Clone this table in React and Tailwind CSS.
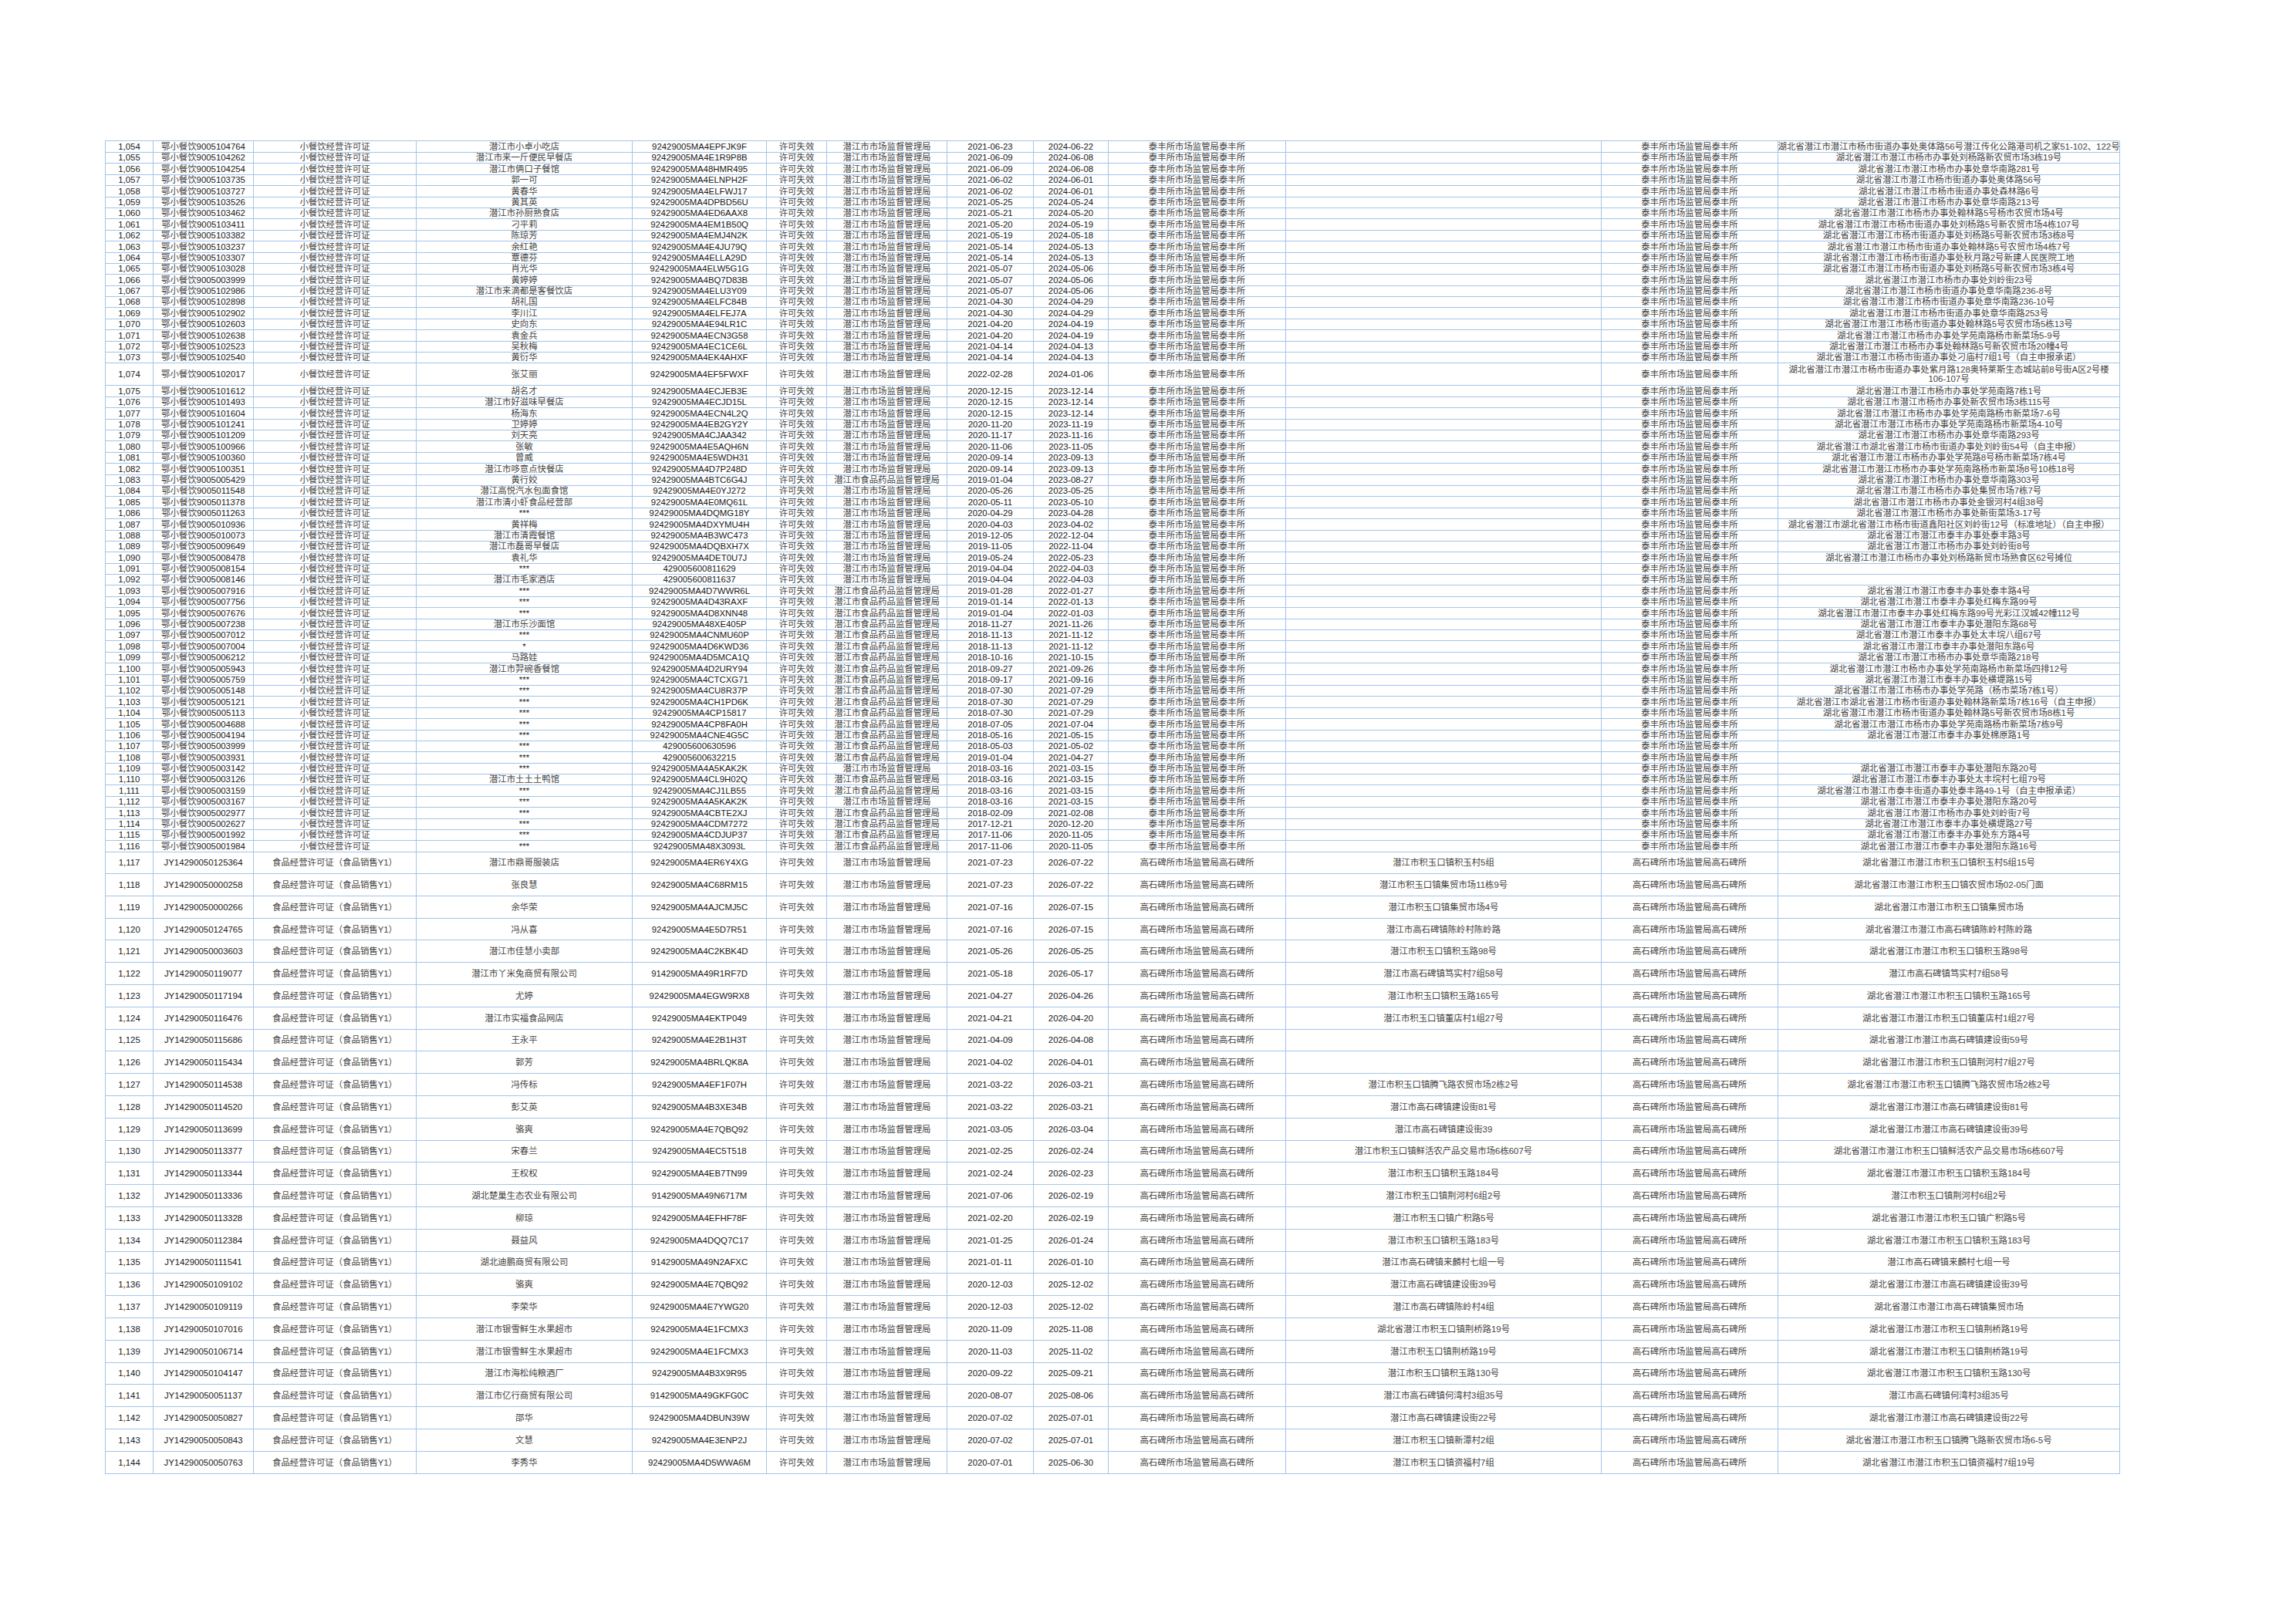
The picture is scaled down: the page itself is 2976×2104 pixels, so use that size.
import React from 'react';

const SHICHANG = '潜江市市场监督管理局';
const SHIYAO = '潜江市食品药品监督管理局';
const TAIFENG = '泰丰所市场监管局泰丰所';
const GAOSHIBEI = '高石碑所市场监管局高石碑所';

// seq, permit no, name, credit code, issuer (m/f), start, end, address
const smallRows = [
  ['1,054', '9005104764', '潜江市小卓小吃店', '92429005MA4EPFJK9F', 'm', '2021-06-23', '2024-06-22', '湖北省潜江市潜江市杨市街道办事处奥体路56号潜江传化公路港司机之家51-102、122号'],
  ['1,055', '9005104262', '潜江市来一斤便民早餐店', '92429005MA4E1R9P8B', 'm', '2021-06-09', '2024-06-08', '湖北省潜江市潜江市杨市办事处刘杨路新农贸市场3栋19号'],
  ['1,056', '9005104254', '潜江市俩口子餐馆', '92429005MA48HMR495', 'm', '2021-06-09', '2024-06-08', '湖北省潜江市潜江市杨市办事处章华南路281号'],
  ['1,057', '9005103735', '郭一可', '92429005MA4ELNPH2F', 'm', '2021-06-02', '2024-06-01', '湖北省潜江市潜江市杨市街道办事处奥体路56号'],
  ['1,058', '9005103727', '黄春华', '92429005MA4ELFWJ17', 'm', '2021-06-02', '2024-06-01', '湖北省潜江市潜江市杨市街道办事处森林路6号'],
  ['1,059', '9005103526', '黄其英', '92429005MA4DPBD56U', 'm', '2021-05-25', '2024-05-24', '湖北省潜江市潜江市杨市办事处章华南路213号'],
  ['1,060', '9005103462', '潜江市孙厨熟食店', '92429005MA4ED6AAX8', 'm', '2021-05-21', '2024-05-20', '湖北省潜江市潜江市杨市办事处翰林路5号杨市农贸市场4号'],
  ['1,061', '9005103411', '刁平莉', '92429005MA4EM1B50Q', 'm', '2021-05-20', '2024-05-19', '湖北省潜江市潜江市杨市街道办事处刘杨路5号新农贸市场4栋107号'],
  ['1,062', '9005103382', '陈琼芳', '92429005MA4EMJ4N2K', 'm', '2021-05-19', '2024-05-18', '湖北省潜江市潜江市杨市街道办事处刘杨路5号新农贸市场3栋8号'],
  ['1,063', '9005103237', '余红艳', '92429005MA4E4JU79Q', 'm', '2021-05-14', '2024-05-13', '湖北省潜江市潜江市杨市街道办事处翰林路5号农贸市场4栋7号'],
  ['1,064', '9005103307', '覃德芬', '92429005MA4ELLA29D', 'm', '2021-05-14', '2024-05-13', '湖北省潜江市潜江市杨市街道办事处秋月路2号新建人民医院工地'],
  ['1,065', '9005103028', '肖光华', '92429005MA4ELW5G1G', 'm', '2021-05-07', '2024-05-06', '湖北省潜江市潜江市杨市街道办事处刘杨路5号新农贸市场3栋4号'],
  ['1,066', '9005003999', '黄婷婷', '92429005MA4BQ7D83B', 'm', '2021-05-07', '2024-05-06', '湖北省潜江市潜江市杨市办事处刘岭街23号'],
  ['1,067', '9005102986', '潜江市来滴都是客餐饮店', '92429005MA4ELU3Y09', 'm', '2021-05-07', '2024-05-06', '湖北省潜江市潜江市杨市街道办事处章华南路236-8号'],
  ['1,068', '9005102898', '胡礼国', '92429005MA4ELFC84B', 'm', '2021-04-30', '2024-04-29', '湖北省潜江市潜江市杨市街道办事处章华南路236-10号'],
  ['1,069', '9005102902', '李川江', '92429005MA4ELFEJ7A', 'm', '2021-04-30', '2024-04-29', '湖北省潜江市潜江市杨市街道办事处章华南路253号'],
  ['1,070', '9005102603', '史向东', '92429005MA4E94LR1C', 'm', '2021-04-20', '2024-04-19', '湖北省潜江市潜江市杨市街道办事处翰林路5号农贸市场5栋13号'],
  ['1,071', '9005102638', '袁金兵', '92429005MA4ECN3G58', 'm', '2021-04-20', '2024-04-19', '湖北省潜江市潜江市杨市办事处学苑南路杨市新菜场5-9号'],
  ['1,072', '9005102523', '吴秋梅', '92429005MA4EC1CE6L', 'm', '2021-04-14', '2024-04-13', '湖北省潜江市潜江市杨市办事处翰林路5号新农贸市场20幢4号'],
  ['1,073', '9005102540', '黄衍华', '92429005MA4EK4AHXF', 'm', '2021-04-14', '2024-04-13', '湖北省潜江市潜江市杨市街道办事处刁庙村7组1号（自主申报承诺）'],
  ['1,074', '9005102017', '张艾丽', '92429005MA4EF5FWXF', 'm', '2022-02-28', '2024-01-06', '湖北省潜江市潜江市杨市街道办事处紫月路128奥特莱斯生态城站前8号街A区2号楼106-107号', true],
  ['1,075', '9005101612', '胡名才', '92429005MA4ECJEB3E', 'm', '2020-12-15', '2023-12-14', '湖北省潜江市潜江市杨市办事处学苑南路7栋1号'],
  ['1,076', '9005101493', '潜江市好滋味早餐店', '92429005MA4ECJD15L', 'm', '2020-12-15', '2023-12-14', '湖北省潜江市潜江市杨市办事处新农贸市场3栋115号'],
  ['1,077', '9005101604', '杨海东', '92429005MA4ECN4L2Q', 'm', '2020-12-15', '2023-12-14', '湖北省潜江市潜江市杨市办事处学苑南路杨市新菜场7-6号'],
  ['1,078', '9005101241', '卫婷婷', '92429005MA4EB2GY2Y', 'm', '2020-11-20', '2023-11-19', '湖北省潜江市潜江市杨市办事处学苑南路杨市新菜场4-10号'],
  ['1,079', '9005101209', '刘天亮', '92429005MA4CJAA342', 'm', '2020-11-17', '2023-11-16', '湖北省潜江市潜江市杨市办事处章华南路293号'],
  ['1,080', '9005100966', '张敏', '92429005MA4E5AQH6N', 'm', '2020-11-06', '2023-11-05', '湖北省潜江市湖北省潜江市杨市街道办事处刘岭街54号（自主申报）'],
  ['1,081', '9005100360', '曾威', '92429005MA4E5WDH31', 'm', '2020-09-14', '2023-09-13', '湖北省潜江市潜江市杨市办事处学苑路8号杨市新菜场7栋4号'],
  ['1,082', '9005100351', '潜江市哆意点快餐店', '92429005MA4D7P248D', 'm', '2020-09-14', '2023-09-13', '湖北省潜江市潜江市杨市办事处学苑南路杨市新菜场8号10栋18号'],
  ['1,083', '9005005429', '黄行姣', '92429005MA4BTC6G4J', 'f', '2019-01-04', '2023-08-27', '湖北省潜江市潜江市杨市办事处章华南路303号'],
  ['1,084', '9005011548', '潜江高悦汽水包面食馆', '92429005MA4E0YJ272', 'm', '2020-05-26', '2023-05-25', '湖北省潜江市潜江市杨市办事处集贸市场7栋7号'],
  ['1,085', '9005011378', '潜江市清小虾食品经营部', '92429005MA4E0MQ61L', 'm', '2020-05-11', '2023-05-10', '湖北省潜江市潜江市杨市办事处金银河村4组38号'],
  ['1,086', '9005011263', '***', '92429005MA4DQMG18Y', 'm', '2020-04-29', '2023-04-28', '湖北省潜江市潜江市杨市办事处新街菜场3-17号'],
  ['1,087', '9005010936', '黄祥梅', '92429005MA4DXYMU4H', 'm', '2020-04-03', '2023-04-02', '湖北省潜江市湖北省潜江市杨市街道鑫阳社区刘岭街12号（标准地址）（自主申报）'],
  ['1,088', '9005010073', '潜江市清霞餐馆', '92429005MA4B3WC473', 'm', '2019-12-05', '2022-12-04', '湖北省潜江市潜江市泰丰办事处泰丰路3号'],
  ['1,089', '9005009649', '潜江市磊哥早餐店', '92429005MA4DQBXH7X', 'm', '2019-11-05', '2022-11-04', '湖北省潜江市潜江市杨市办事处刘岭街8号'],
  ['1,090', '9005008478', '袁礼华', '92429005MA4DET0U7J', 'm', '2019-05-24', '2022-05-23', '湖北省潜江市潜江市杨市办事处刘杨路新贸市场熟食区62号摊位'],
  ['1,091', '9005008154', '***', '429005600811629', 'm', '2019-04-04', '2022-04-03', ''],
  ['1,092', '9005008146', '潜江市毛家酒店', '429005600811637', 'm', '2019-04-04', '2022-04-03', ''],
  ['1,093', '9005007916', '***', '92429005MA4D7WWR6L', 'f', '2019-01-28', '2022-01-27', '湖北省潜江市潜江市泰丰办事处泰丰路4号'],
  ['1,094', '9005007756', '***', '92429005MA4D43RAXF', 'f', '2019-01-14', '2022-01-13', '湖北省潜江市潜江市泰丰办事处红梅东路99号'],
  ['1,095', '9005007676', '***', '92429005MA4D8XNN48', 'f', '2019-01-04', '2022-01-03', '湖北省潜江市潜江市泰丰办事处红梅东路99号光彩江汉城42幢112号'],
  ['1,096', '9005007238', '潜江市乐沙面馆', '92429005MA48XE405P', 'f', '2018-11-27', '2021-11-26', '湖北省潜江市潜江市泰丰办事处潜阳东路68号'],
  ['1,097', '9005007012', '***', '92429005MA4CNMU60P', 'f', '2018-11-13', '2021-11-12', '湖北省潜江市潜江市泰丰办事处太丰垸八组67号'],
  ['1,098', '9005007004', '*', '92429005MA4D6KWD36', 'f', '2018-11-13', '2021-11-12', '湖北省潜江市潜江市泰丰办事处潜阳东路6号'],
  ['1,099', '9005006212', '马路娃', '92429005MA4D5MCA1Q', 'f', '2018-10-16', '2021-10-15', '湖北省潜江市潜江市杨市办事处章华南路218号'],
  ['1,100', '9005005943', '潜江市羿碗香餐馆', '92429005MA4D2URY94', 'f', '2018-09-27', '2021-09-26', '湖北省潜江市潜江市杨市办事处学苑南路杨市新菜场四排12号'],
  ['1,101', '9005005759', '***', '92429005MA4CTCXG71', 'f', '2018-09-17', '2021-09-16', '湖北省潜江市潜江市泰丰办事处横堤路15号'],
  ['1,102', '9005005148', '***', '92429005MA4CU8R37P', 'f', '2018-07-30', '2021-07-29', '湖北省潜江市潜江市杨市办事处学苑路（杨市菜场7栋1号）'],
  ['1,103', '9005005121', '***', '92429005MA4CH1PD6K', 'f', '2018-07-30', '2021-07-29', '湖北省潜江市湖北省潜江市杨市街道办事处翰林路新菜场7栋16号（自主申报）'],
  ['1,104', '9005005113', '***', '92429005MA4CP15817', 'f', '2018-07-30', '2021-07-29', '湖北省潜江市潜江市杨市街道办事处翰林路5号新农贸市场8栋1号'],
  ['1,105', '9005004688', '***', '92429005MA4CP8FA0H', 'f', '2018-07-05', '2021-07-04', '湖北省潜江市潜江市杨市办事处学苑南路杨市新菜场7栋9号'],
  ['1,106', '9005004194', '***', '92429005MA4CNE4G5C', 'f', '2018-05-16', '2021-05-15', '湖北省潜江市潜江市泰丰办事处棉原路1号'],
  ['1,107', '9005003999', '***', '429005600630596', 'f', '2018-05-03', '2021-05-02', ''],
  ['1,108', '9005003931', '***', '429005600632215', 'f', '2019-01-04', '2021-04-27', ''],
  ['1,109', '9005003142', '***', '92429005MA4A5KAK2K', 'm', '2018-03-16', '2021-03-15', '湖北省潜江市潜江市泰丰办事处潜阳东路20号'],
  ['1,110', '9005003126', '潜江市土土土鸭馆', '92429005MA4CL9H02Q', 'f', '2018-03-16', '2021-03-15', '湖北省潜江市潜江市泰丰办事处太丰垸村七组79号'],
  ['1,111', '9005003159', '***', '92429005MA4CJ1LB55', 'f', '2018-03-16', '2021-03-15', '湖北省潜江市潜江市泰丰街道办事处泰丰路49-1号（自主申报承诺）'],
  ['1,112', '9005003167', '***', '92429005MA4A5KAK2K', 'm', '2018-03-16', '2021-03-15', '湖北省潜江市潜江市泰丰办事处潜阳东路20号'],
  ['1,113', '9005002977', '***', '92429005MA4CBTE2XJ', 'f', '2018-02-09', '2021-02-08', '湖北省潜江市潜江市杨市办事处刘岭街7号'],
  ['1,114', '9005002627', '***', '92429005MA4CDM7272', 'f', '2017-12-21', '2020-12-20', '湖北省潜江市潜江市泰丰办事处横堤路27号'],
  ['1,115', '9005001992', '***', '92429005MA4CDJUP37', 'f', '2017-11-06', '2020-11-05', '湖北省潜江市潜江市泰丰办事处东方路4号'],
  ['1,116', '9005001984', '***', '92429005MA48X3093L', 'f', '2017-11-06', '2020-11-05', '湖北省潜江市潜江市泰丰办事处潜阳东路16号'],
];

// seq, permit no, name, credit code, start, end, business address, address
const foodRows = [
  ['1,117', 'JY14290050125364', '潜江市鼎哥服装店', '92429005MA4ER6Y4XG', '2021-07-23', '2026-07-22', '潜江市积玉口镇积玉村5组', '湖北省潜江市潜江市积玉口镇积玉村5组15号'],
  ['1,118', 'JY14290050000258', '张良慧', '92429005MA4C68RM15', '2021-07-23', '2026-07-22', '潜江市积玉口镇集贸市场11栋9号', '湖北省潜江市潜江市积玉口镇农贸市场02-05门面'],
  ['1,119', 'JY14290050000266', '余华荣', '92429005MA4AJCMJ5C', '2021-07-16', '2026-07-15', '潜江市积玉口镇集贸市场4号', '湖北省潜江市潜江市积玉口镇集贸市场'],
  ['1,120', 'JY14290050124765', '冯从喜', '92429005MA4E5D7R51', '2021-07-16', '2026-07-15', '潜江市高石碑镇陈岭村陈岭路', '湖北省潜江市潜江市高石碑镇陈岭村陈岭路'],
  ['1,121', 'JY14290050003603', '潜江市佳慧小卖部', '92429005MA4C2KBK4D', '2021-05-26', '2026-05-25', '潜江市积玉口镇积玉路98号', '湖北省潜江市潜江市积玉口镇积玉路98号'],
  ['1,122', 'JY14290050119077', '潜江市丫米兔商贸有限公司', '91429005MA49R1RF7D', '2021-05-18', '2026-05-17', '潜江市高石碑镇笃实村7组58号', '潜江市高石碑镇笃实村7组58号'],
  ['1,123', 'JY14290050117194', '尤婷', '92429005MA4EGW9RX8', '2021-04-27', '2026-04-26', '潜江市积玉口镇积玉路165号', '湖北省潜江市潜江市积玉口镇积玉路165号'],
  ['1,124', 'JY14290050116476', '潜江市实福食品网店', '92429005MA4EKTP049', '2021-04-21', '2026-04-20', '潜江市积玉口镇董店村1组27号', '湖北省潜江市潜江市积玉口镇董店村1组27号'],
  ['1,125', 'JY14290050115686', '王永平', '92429005MA4E2B1H3T', '2021-04-09', '2026-04-08', '', '湖北省潜江市潜江市高石碑镇建设街59号'],
  ['1,126', 'JY14290050115434', '郭芳', '92429005MA4BRLQK8A', '2021-04-02', '2026-04-01', '', '湖北省潜江市潜江市积玉口镇荆河村7组27号'],
  ['1,127', 'JY14290050114538', '冯传标', '92429005MA4EF1F07H', '2021-03-22', '2026-03-21', '潜江市积玉口镇腾飞路农贸市场2栋2号', '湖北省潜江市潜江市积玉口镇腾飞路农贸市场2栋2号'],
  ['1,128', 'JY14290050114520', '彭艾英', '92429005MA4B3XE34B', '2021-03-22', '2026-03-21', '潜江市高石碑镇建设街81号', '湖北省潜江市潜江市高石碑镇建设街81号'],
  ['1,129', 'JY14290050113699', '骆爽', '92429005MA4E7QBQ92', '2021-03-05', '2026-03-04', '潜江市高石碑镇建设街39', '湖北省潜江市潜江市高石碑镇建设街39号'],
  ['1,130', 'JY14290050113377', '宋春兰', '92429005MA4EC5T518', '2021-02-25', '2026-02-24', '潜江市积玉口镇鲜活农产品交易市场6栋607号', '湖北省潜江市潜江市积玉口镇鲜活农产品交易市场6栋607号'],
  ['1,131', 'JY14290050113344', '王权权', '92429005MA4EB7TN99', '2021-02-24', '2026-02-23', '潜江市积玉口镇积玉路184号', '湖北省潜江市潜江市积玉口镇积玉路184号'],
  ['1,132', 'JY14290050113336', '湖北楚巢生态农业有限公司', '91429005MA49N6717M', '2021-07-06', '2026-02-19', '潜江市积玉口镇荆河村6组2号', '潜江市积玉口镇荆河村6组2号'],
  ['1,133', 'JY14290050113328', '柳琼', '92429005MA4EFHF78F', '2021-02-20', '2026-02-19', '潜江市积玉口镇广积路5号', '湖北省潜江市潜江市积玉口镇广积路5号'],
  ['1,134', 'JY14290050112384', '聂益风', '92429005MA4DQQ7C17', '2021-01-25', '2026-01-24', '潜江市积玉口镇积玉路183号', '湖北省潜江市潜江市积玉口镇积玉路183号'],
  ['1,135', 'JY14290050111541', '湖北迪鹏商贸有限公司', '91429005MA49N2AFXC', '2021-01-11', '2026-01-10', '潜江市高石碑镇来麟村七组一号', '潜江市高石碑镇来麟村七组一号'],
  ['1,136', 'JY14290050109102', '骆爽', '92429005MA4E7QBQ92', '2020-12-03', '2025-12-02', '潜江市高石碑镇建设街39号', '湖北省潜江市潜江市高石碑镇建设街39号'],
  ['1,137', 'JY14290050109119', '李荣华', '92429005MA4E7YWG20', '2020-12-03', '2025-12-02', '潜江市高石碑镇陈岭村4组', '湖北省潜江市潜江市高石碑镇集贸市场'],
  ['1,138', 'JY14290050107016', '潜江市银雪鲜生水果超市', '92429005MA4E1FCMX3', '2020-11-09', '2025-11-08', '湖北省潜江市积玉口镇荆桥路19号', '湖北省潜江市潜江市积玉口镇荆桥路19号'],
  ['1,139', 'JY14290050106714', '潜江市银雪鲜生水果超市', '92429005MA4E1FCMX3', '2020-11-03', '2025-11-02', '潜江市积玉口镇荆桥路19号', '湖北省潜江市潜江市积玉口镇荆桥路19号'],
  ['1,140', 'JY14290050104147', '潜江市海松纯粮酒厂', '92429005MA4B3X9R95', '2020-09-22', '2025-09-21', '潜江市积玉口镇积玉路130号', '湖北省潜江市潜江市积玉口镇积玉路130号'],
  ['1,141', 'JY14290050051137', '潜江市亿行商贸有限公司', '91429005MA49GKFG0C', '2020-08-07', '2025-08-06', '潜江市高石碑镇何湾村3组35号', '潜江市高石碑镇何湾村3组35号'],
  ['1,142', 'JY14290050050827', '邵华', '92429005MA4DBUN39W', '2020-07-02', '2025-07-01', '潜江市高石碑镇建设街22号', '湖北省潜江市潜江市高石碑镇建设街22号'],
  ['1,143', 'JY14290050050843', '文慧', '92429005MA4E3ENP2J', '2020-07-02', '2025-07-01', '潜江市积玉口镇新潭村2组', '湖北省潜江市潜江市积玉口镇腾飞路新农贸市场6-5号'],
  ['1,144', 'JY14290050050763', '李秀华', '92429005MA4D5WWA6M', '2020-07-01', '2025-06-30', '潜江市积玉口镇资福村7组', '湖北省潜江市潜江市积玉口镇资福村7组19号'],
];

const gridCols =
  'grid grid-cols-[62px_130px_211px_280px_174px_78px_156px_112px_97px_230px_409px_229px_443px]';

const Cell = ({ children, wrap, dark }) => (
  <div
    className={`flex items-center justify-center border-r border-b border-[#a3c5e8] text-center ${
      dark ? 'text-[#1a1a1a]' : 'text-[#444]'
    } ${wrap ? 'px-1 leading-[12px]' : 'whitespace-nowrap leading-[14px]'}`}
  >
    {children}
  </div>
);

const App = () => {
  return (
    <div
      className="bg-white min-h-screen pt-[182px] pl-[136px] pb-[190px] text-[11.4px]"
      style={{ fontFamily: '"Liberation Sans", "Noto Sans CJK SC", sans-serif' }}
    >
      <div className="w-[2611px] border-l border-t border-[#a3c5e8]">
        {smallRows.map((r) => (
          <div key={r[0]} className={`${gridCols} ${r[8] ? 'h-[29px]' : 'h-[14.4px]'}`}>
            <Cell dark>{r[0]}</Cell>
            <Cell>鄂小餐饮<span className="text-[#1a1a1a]">{r[1]}</span></Cell>
            <Cell>小餐饮经营许可证</Cell>
            <Cell dark={r[2].startsWith('*')}>{r[2]}</Cell>
            <Cell dark>{r[3]}</Cell>
            <Cell>许可失效</Cell>
            <Cell>{r[4] === 'f' ? SHIYAO : SHICHANG}</Cell>
            <Cell dark>{r[5]}</Cell>
            <Cell dark>{r[6]}</Cell>
            <Cell>{TAIFENG}</Cell>
            <Cell></Cell>
            <Cell>{TAIFENG}</Cell>
            <Cell wrap={r[8]}>{r[7]}</Cell>
          </div>
        ))}
        {foodRows.map((r) => (
          <div key={r[0]} className={`${gridCols} h-[28.8px]`}>
            <Cell dark>{r[0]}</Cell>
            <Cell dark>{r[1]}</Cell>
            <Cell>食品经营许可证（食品销售Y1）</Cell>
            <Cell>{r[2]}</Cell>
            <Cell dark>{r[3]}</Cell>
            <Cell>许可失效</Cell>
            <Cell>{SHICHANG}</Cell>
            <Cell dark>{r[4]}</Cell>
            <Cell dark>{r[5]}</Cell>
            <Cell>{GAOSHIBEI}</Cell>
            <Cell>{r[6]}</Cell>
            <Cell>{GAOSHIBEI}</Cell>
            <Cell>{r[7]}</Cell>
          </div>
        ))}
      </div>
    </div>
  );
};

export default App;
